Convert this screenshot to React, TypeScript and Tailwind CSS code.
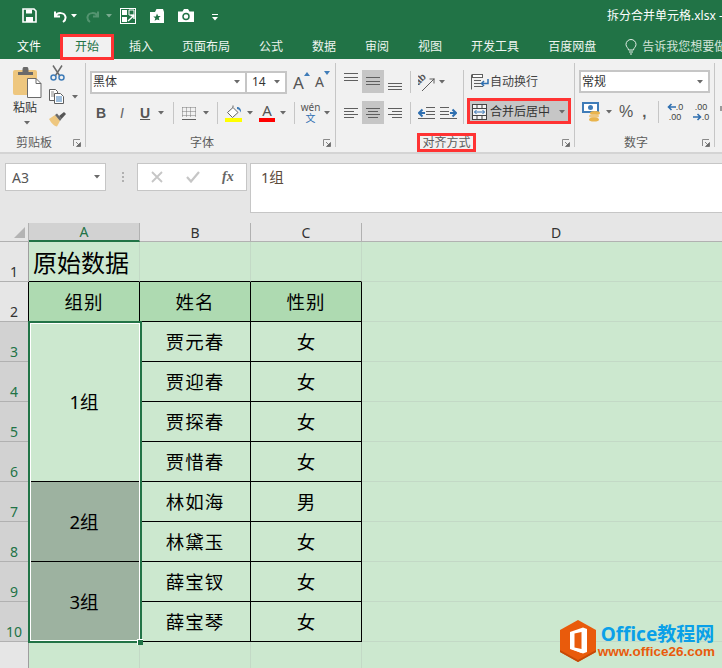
import React from "react";

const rows = [
  { n: 1, sel: false },
  { n: 2, sel: false },
  { n: 3, sel: true },
  { n: 4, sel: true },
  { n: 5, sel: true },
  { n: 6, sel: true },
  { n: 7, sel: true },
  { n: 8, sel: true },
  { n: 9, sel: true },
  { n: 10, sel: true },
  { n: 11, sel: false },
];

const people = [
  ["贾元春", "女"],
  ["贾迎春", "女"],
  ["贾探春", "女"],
  ["贾惜春", "女"],
  ["林如海", "男"],
  ["林黛玉", "女"],
  ["薛宝钗", "女"],
  ["薛宝琴", "女"],
];

const tabs = ["插入", "页面布局", "公式", "数据", "审阅", "视图", "开发工具", "百度网盘"];

const Caret = ({ className = "" }: { className?: string }) => (
  <svg width="6" height="4" viewBox="0 0 6 4" className={className}>
    <path d="M0 0h6L3 3.500z" fill="#6a6a6a" />
  </svg>
);

const Launcher = () => (
  <svg width="8" height="8" viewBox="0 0 8 8" className="ml-[5px] mr-[4px] shrink-0">
    <path d="M0.500 7V0.500H7" fill="none" stroke="#8a8a8a" />
    <path d="M3 3l3 3M7.500 3.500v4h-4z" fill="#6a6a6a" stroke="#6a6a6a" strokeWidth="0.800" />
  </svg>
);

const Sep = ({ className = "" }: { className?: string }) => (
  <div className={`w-px bg-[#c6c6c6] shrink-0 ${className}`} />
);

const GroupSep = () => <div className="w-px h-[84px] mt-[4px] bg-[#c6c6c6] shrink-0" />;

const Lines = ({ lines, className = "" }: { lines: number[][]; className?: string }) => (
  <svg width="15" height="23" viewBox="0 0 15 23" className={className}>
    {lines.map((l, i) => (
      <rect key={i} x={l[0]} y={l[2]} width={l[1] - l[0]} height="1" fill="#5f5f5f" />
    ))}
  </svg>
);

const GroupLabel = ({ children }: { children: React.ReactNode }) => (
  <div className="mt-auto flex h-[19px] items-center">
    <div className="flex-1 text-center text-[12px] leading-[19px] text-[#5c5c5c]">{children}</div>
    <Launcher />
  </div>
);

const Combo = ({ text, className = "" }: { text: string; className?: string }) => (
  <div className={`flex h-[23px] items-center justify-between border-2 border-[#c6c6c6] bg-white pl-[1px] pr-[5px] text-[12px] text-[#333] ${className}`}>
    <span>{text}</span>
    <Caret />
  </div>
);

const PasteIcon = () => (
  <svg width="29" height="31" viewBox="0 0 29 31">
    <rect x="0" y="3" width="24" height="25" rx="2" fill="#eec77f" />
    <path d="M5 8V5h4.500V2.500a3 3 0 0 1 6 0V5H20v3z" fill="#6a6a6a" />
    <path d="M14.500 11.500h8.500l5 5v14h-13.500z" fill="#fff" stroke="#6a6a6a" />
    <path d="M23 11.500v5h5" fill="none" stroke="#6a6a6a" />
  </svg>
);

const ScissorsIcon = () => (
  <svg width="15" height="16" viewBox="0 0 15 16">
    <path d="M3 0.500L9.500 10.500M12 0.500L5.500 10.500" stroke="#6a6a6a" strokeWidth="1.500" fill="none" />
    <circle cx="3.500" cy="12.500" r="2.500" fill="none" stroke="#3f7cb8" strokeWidth="1.500" />
    <circle cx="11.500" cy="12.500" r="2.500" fill="none" stroke="#3f7cb8" strokeWidth="1.500" />
  </svg>
);

const CopyIcon = () => (
  <svg width="16" height="15" viewBox="0 0 16 15">
    <path d="M0.500 0.500h6l2 2v9h-8z" fill="#fff" stroke="#5f5f5f" />
    <path d="M5.500 4.500h6l3 3v7h-9z" fill="#fff" stroke="#5f5f5f" />
    <path d="M7 8h6M7 10h6M7 12h6" stroke="#3f7cb8" />
    <path d="M2 3h3M2 5h3M2 7h3" stroke="#8a8a8a" />
  </svg>
);

const BrushIcon = () => (
  <svg width="17" height="15" viewBox="0 0 17 15">
    <path d="M0 7l6-4 5 6-3 5.500c-3 0-6-4-8-7.500z" fill="#eec77f" />
    <path d="M6 3l5 6 1.500-2L8 1.500z" fill="#6a6a6a" />
    <path d="M10 4l5-4 2 2-4.500 5z" fill="#555" />
  </svg>
);

const BucketIcon = () => (
  <svg width="17" height="13" viewBox="0 0 17 13">
    <path d="M8 0.500v2M8 2.500L13 7.500 7.500 12.500 2.500 7.500z" fill="#fff" stroke="#666" />
    <path d="M12 2c2.500 0 4.500 2 4 5.500-.8-1.500-1.500-3-4-3.500z" fill="#3f7cb8" />
  </svg>
);

const BordersIcon = () => (
  <svg width="14" height="13" viewBox="0 0 14 13">
    <path d="M0.500 0.500h13M0.500 4.500h13M0.500 8.500h13M0.500 0.500v10M4.500 0.500v10M8.500 0.500v10M13.500 0.500v10" stroke="#7a7a7a" strokeDasharray="1 1" fill="none" />
    <path d="M0 12.500h14" stroke="#5f5f5f" />
  </svg>
);

const OrientIcon = () => (
  <svg width="17" height="20" viewBox="0 0 17 20">
    <text x="0" y="13" transform="rotate(-45 1 13)" fontFamily="Liberation Sans" fontSize="10" fontWeight="700" fill="#555">ab</text>
    <path d="M4 19L16 7" stroke="#5f5f5f" />
    <path d="M16 6.500v5M16.500 7h-5" stroke="#5f5f5f" fill="none" />
  </svg>
);

const Indent = ({ flip = false }: { flip?: boolean }) => (
  <svg width="17" height="12" viewBox="0 0 17 12" className={flip ? "-scale-x-100" : ""}>
    <path d="M8 0.500h9M8 4.500h9M8 7.500h9M0 11.500h17" stroke="#5f5f5f" />
    <path d="M7 6H2M4.500 2.500L1 6l3.500 3.500" stroke="#2f6fb0" strokeWidth="2" fill="none" />
  </svg>
);

const WrapIcon = () => (
  <svg width="18" height="16" viewBox="0 0 18 16">
    <rect x="1.500" y="0.500" width="10" height="3" fill="#fff" stroke="#5f5f5f" />
    <path d="M0.500 0.500v15M3 6.500h7M3 9.500h7M3 12.500h9" stroke="#5f5f5f" />
    <path d="M17 5v4.500h-6M13 7l-2.500 2.500L13 12" stroke="#2f6fb0" strokeWidth="1.500" fill="none" />
  </svg>
);

const MergeIcon = () => (
  <svg width="15" height="16" viewBox="0 0 15 16">
    <rect x="0.500" y="0.500" width="14" height="15" fill="#f4f4f4" stroke="#444" />
    <path d="M0 4.500h15M0 11.500h15M5 0v4M10 0v4M5 12v4M10 12v4" stroke="#444" />
    <path d="M2.500 8h10M4.500 6l-2 2 2 2M10.500 6l2 2-2 2" stroke="#2f6fb0" fill="none" />
  </svg>
);

const CurrencyIcon = () => (
  <svg width="20" height="20" viewBox="0 0 20 20">
    <rect x="0" y="0" width="17" height="11" fill="#3f7cb8" />
    <rect x="2" y="2" width="13" height="7" fill="#fff" />
    <circle cx="8.500" cy="5.500" r="2.500" fill="#3f7cb8" />
    <ellipse cx="13" cy="11" rx="5" ry="2" fill="#e9b44c" />
    <ellipse cx="12" cy="14" rx="5" ry="2" fill="#eec77f" />
    <ellipse cx="12" cy="17.500" rx="5" ry="2" fill="#e9b44c" />
  </svg>
);

const Arrow = ({ flip = false }: { flip?: boolean }) => (
  <svg width="9" height="8" viewBox="0 0 9 8" className={flip ? "-scale-x-100" : ""}>
    <path d="M9 4H1.500M4.500 1L1.500 4l3 3" stroke="#2f6fb0" strokeWidth="1.600" fill="none" />
  </svg>
);

const Bulb = () => (
  <svg width="12" height="16" viewBox="0 0 12 16">
    <path d="M3.500 11c0-2-2.500-3-2.500-5.500a5 5 0 0 1 10 0c0 2.500-2.500 3.500-2.500 5.500z" fill="none" stroke="#e4efe8" />
    <path d="M4 13h4M5 15h2" stroke="#e4efe8" />
  </svg>
);

const Logo = () => (
  <svg width="38" height="44" viewBox="0 0 38 44">
    <path d="M19 1l18 10v22L19 43 1 33V11z" fill="#e95b0c" />
    <path d="M1 33l18 10 18-10v-2L19 41 1 31z" fill="#c44a08" />
    <path d="M11 13l13-4.500 4 1.500v23l-4 1.500-13-4.500z" fill="#fff" />
    <path d="M15.500 14.500l7-1.500v17l-7-1.500z" fill="#e95b0c" />
    <path d="M22.500 13v21l-11.500-4.500 11.500 1.500z" fill="#fff" />
  </svg>
);

function Arrowhead({ className = "" }: { className?: string }) {
  return (
    <svg width="6" height="4" viewBox="0 0 6 4" className={className}>
      <path d="M0 0h6L3 3.500z" fill="#fff" />
    </svg>
  );
}

function Ribbon() {
  return (
    <div className="flex h-[95px] border-b-2 border-[#d4d4d4] bg-[#f1f1f1]">
      {/* 剪贴板 */}
      <div className="flex w-[85px] shrink-0 flex-col">
        <div className="flex pl-[13px]">
          <div className="flex w-[36px] flex-col pt-[8px]">
            <PasteIcon />
            <div className="mt-[1px] w-[24px] text-[12px] leading-[17px] text-[#333]">粘贴</div>
            <Caret className="ml-[11px] mt-[5px]" />
          </div>
          <div className="flex flex-col pt-[6px]">
            <div className="ml-[1px]"><ScissorsIcon /></div>
            <div className="mt-[8px] flex items-center gap-[7px]">
              <CopyIcon />
              <Caret />
            </div>
            <div className="mt-[8px]"><BrushIcon /></div>
          </div>
        </div>
        <GroupLabel>剪贴板</GroupLabel>
      </div>
      <GroupSep />

      {/* 字体 */}
      <div className="flex w-[249px] shrink-0 flex-col">
        <div className="flex items-center pl-[4px] pt-[11px]">
          <Combo text="黑体" className="w-[157px]" />
          <Combo text="14" className="w-[40px] border-l-0 pl-[5px]" />
          <div className="ml-[6px] flex items-start">
            <span className="text-[17px] leading-[23px] text-[#555]">A</span>
            <svg width="6" height="4" viewBox="0 0 6 4" className="mt-[1px]"><path d="M0 4h6L3 0z" fill="#3f7cb8" /></svg>
          </div>
          <div className="ml-[5px] flex items-start">
            <span className="text-[14px] leading-[24px] text-[#555]">A</span>
            <svg width="6" height="4" viewBox="0 0 6 4" className="mt-[1px]"><path d="M0 0h6L3 4z" fill="#3f7cb8" /></svg>
          </div>
        </div>
        <div className="mt-[8px] flex h-[22px] items-center pl-[10px]">
          <span className="w-[24px] font-['Liberation_Sans'] text-[14px] font-bold text-[#555]">B</span>
          <span className="w-[20px] font-['Liberation_Sans'] text-[14px] italic text-[#666]">I</span>
          <span className="w-[17px] font-['Liberation_Sans'] text-[14px] font-bold text-[#555] underline">U</span>
          <Caret className="ml-[1px]" />
          <Sep className="ml-[9px] h-[22px]" />
          <div className="ml-[8px]"><BordersIcon /></div>
          <Caret className="ml-[7px]" />
          <Sep className="ml-[8px] h-[22px]" />
          <div className="ml-[7px] flex w-[17px] flex-col">
            <BucketIcon />
            <div className="h-[4px] bg-[#ffff00]" />
          </div>
          <Caret className="ml-[5px]" />
          <div className="ml-[6px] flex w-[16px] flex-col items-center">
            <span className="text-[15px] leading-[13px] text-[#555]">A</span>
            <div className="mt-[1px] h-[4px] w-full bg-[#ff0000]" />
          </div>
          <Caret className="ml-[5px]" />
          <Sep className="ml-[8px] h-[22px]" />
          <div className="ml-[7px] flex w-[17px] flex-col items-center text-[10px] leading-[11px]">
            <span className="text-[#555]">wén</span>
            <span className="text-[#2f6fb0]">文</span>
          </div>
          <Caret className="ml-[5px]" />
        </div>
        <GroupLabel>字体</GroupLabel>
      </div>
      <GroupSep />

      {/* 对齐方式 */}
      <div className="flex w-[238px] shrink-0 flex-col">
        <div className="flex pl-[8px] pt-[11px]">
          <div className="flex w-[66px] flex-col gap-[8px]">
            <div className="flex h-[23px] items-center">
              <Lines lines={[[0, 14, 3], [0, 14, 7], [0, 14, 10]]} />
              <div className="ml-[3px] flex h-[23px] w-[22px] items-center justify-center bg-[#c6c6c6]">
                <Lines lines={[[0, 14, 7], [0, 14, 11], [0, 14, 14]]} />
              </div>
              <Lines className="ml-[4px]" lines={[[0, 14, 13], [0, 14, 16], [0, 14, 19]]} />
            </div>
            <div className="flex h-[23px] items-center">
              <Lines lines={[[0, 14, 7], [0, 10, 10], [0, 14, 13], [0, 10, 16]]} />
              <div className="ml-[3px] flex h-[23px] w-[22px] items-center justify-center bg-[#c6c6c6]">
                <Lines lines={[[0, 14, 7], [2, 12, 10], [0, 14, 13], [2, 12, 16]]} />
              </div>
              <Lines className="ml-[4px]" lines={[[0, 14, 7], [4, 14, 10], [0, 14, 13], [4, 14, 16]]} />
            </div>
          </div>
          <div className="flex w-[53px] shrink-0 flex-col gap-[8px]">
            <div className="flex h-[23px] items-center">
              <Sep className="h-[22px]" />
              <div className="ml-[7px]"><OrientIcon /></div>
              <Caret className="ml-[4px]" />
            </div>
            <div className="flex h-[23px] items-center">
              <Sep className="h-[22px]" />
              <div className="ml-[7px] flex gap-[5px]">
                <Indent />
                <Indent flip />
              </div>
            </div>
          </div>
          <Sep className="h-[54px]" />
          <div className="flex flex-col">
            <div className="ml-[7px] flex h-[23px] items-center gap-[1px] text-[12px] text-[#444]">
              <WrapIcon />
              <span>自动换行</span>
            </div>
            <div className="ml-[3px] mt-[5px] flex h-[26px] w-[104px] items-center border-[3px] border-[#ff3333] bg-[#c6c6c6] pl-[2px] pt-[1px] text-[12px] text-[#333]">
              <MergeIcon />
              <span className="ml-[3px] whitespace-nowrap">合并后居中</span>
              <Caret className="ml-[9px]" />
            </div>
          </div>
        </div>
        <div className="mt-auto flex h-[19px] items-center">
          <div className="flex flex-1 justify-center">
            <span className="h-[19px] border-[3px] border-[#ff3333] px-[2px] text-[12px] leading-[13px] text-[#5c5c5c]">对齐方式</span>
          </div>
          <Launcher />
        </div>
      </div>
      <GroupSep />

      {/* 数字 */}
      <div className="flex w-[139px] shrink-0 flex-col">
        <div className="pl-[4px] pr-[4px] pt-[11px]">
          <Combo text="常规" />
        </div>
        <div className="mt-[8px] flex h-[22px] items-center pl-[7px]">
          <CurrencyIcon />
          <Caret className="ml-[4px]" />
          <span className="ml-[7px] font-['Liberation_Sans'] text-[16px] text-[#555]">%</span>
          <span className="ml-[9px] font-['Liberation_Sans'] text-[15px] font-bold leading-[12px] text-[#555]">,</span>
          <Sep className="ml-[12px] h-[22px]" />
          <div className="ml-[5px] flex w-[21px] flex-col items-center font-['Liberation_Sans'] text-[9px] leading-[10px] text-[#444]">
            <div className="flex items-center"><Arrow />.0</div>
            <div>.00</div>
          </div>
          <div className="ml-[5px] flex w-[21px] flex-col items-center font-['Liberation_Sans'] text-[9px] leading-[10px] text-[#444]">
            <div>.00</div>
            <div className="flex items-center"><Arrow flip />.0</div>
          </div>
        </div>
        <GroupLabel>数字</GroupLabel>
      </div>
      <GroupSep />
      <div className="ml-[5px] mt-[47px] h-[5px] w-[2px] bg-[#9a9a9a]" />
    </div>
  );
}

function Sheet() {
  const head = "flex items-center justify-center border-r border-b border-[#b1b1b1] text-[14px]";
  const rowHead = "flex items-end justify-center border-b border-r pb-[1px] text-[14px] leading-[17px]";
  const grid = "border-r border-b border-[#c3d9c6] bg-[#cce8cf]";
  const cell = "flex items-center justify-center border-r border-b border-black text-[18.5px] text-black";
  const headCell = "flex items-center justify-center border-r border-b border-black bg-[#aedab1] text-[18.5px] tracking-[1px] text-black";

  return (
    <div className="grid grid-cols-[29px_111px_111px_111px_389px] grid-rows-[19px_repeat(11,40px)] bg-[#cce8cf]">
      <div className="flex items-end justify-end border-r border-b border-[#b1b1b1] bg-[#e6e6e6] pb-[3px] pr-[3px]">
        <svg width="11" height="11" viewBox="0 0 11 11"><path d="M11 0v11H0z" fill="#b4b4b4" /></svg>
      </div>
      <div className="flex items-center justify-center border-b-2 border-r border-b-[#217346] border-r-[#b1b1b1] bg-[#d2d2d2] text-[14px] text-[#217346]">A</div>
      <div className={`${head} bg-[#e6e6e6] text-[#333]`}>B</div>
      <div className={`${head} bg-[#e6e6e6] text-[#333]`}>C</div>
      <div className={`${head} bg-[#e6e6e6] text-[#333]`}>D</div>

      {rows.map((r) => (
        <div
          key={r.n}
          style={{ gridColumnStart: 1, gridRowStart: r.n + 1 }}
          className={`${rowHead} ${r.n === 2 ? "border-r-black" : "border-r-[#9e9e9e]"} border-b-[#b1b1b1] ${
            r.sel ? "bg-[#d2d2d2] text-[#217346]" : "bg-[#e6e6e6] text-[#333]"
          }`}
        >
          {r.n === 11 ? "" : r.n}
        </div>
      ))}

      {/* row 1 */}
      <div className="col-start-2 row-start-2 flex items-end border-r border-b border-b-black border-r-[#c3d9c6] bg-[#cce8cf] pb-[1px] pl-[4px] text-[24px] leading-[34px] text-black">原始数据</div>
      <div className="col-start-3 row-start-2 border-r border-b border-b-black border-r-[#c3d9c6]" />
      <div className="col-start-4 row-start-2 border-r border-b border-b-black border-r-[#c3d9c6]" />

      {/* row 2 */}
      <div className={`${headCell} col-start-2 row-start-3`}>组别</div>
      <div className={`${headCell} col-start-3 row-start-3`}>姓名</div>
      <div className={`${headCell} col-start-4 row-start-3`}>性别</div>

      {/* merged groups */}
      <div className={`${cell} col-start-2 row-start-4 row-span-4 bg-[#cce8cf]`}>1组</div>
      <div className={`${cell} col-start-2 row-start-8 row-span-2 bg-[#9db2a0]`}>2组</div>
      <div className={`${cell} col-start-2 row-start-10 row-span-2 bg-[#9db2a0]`}>3组</div>

      {people.map((p, i) => (
        <React.Fragment key={p[0]}>
          <div style={{ gridColumnStart: 3, gridRowStart: i + 4 }} className={`${cell} bg-[#cce8cf] tracking-[1px]`}>{p[0]}</div>
          <div style={{ gridColumnStart: 4, gridRowStart: i + 4 }} className={`${cell} bg-[#cce8cf]`}>{p[1]}</div>
        </React.Fragment>
      ))}

      {/* column D and row 11 */}
      {rows.map((r) => (
        <div key={r.n} style={{ gridColumnStart: 5, gridRowStart: r.n + 1 }} className={grid} />
      ))}
      <div className={`${grid} col-start-2 row-start-12`} />
      <div className={`${grid} col-start-3 row-start-12`} />
      <div className={`${grid} col-start-4 row-start-12`} />

      {/* selection A3:A10 */}
      <div className="pointer-events-none relative col-start-2 row-start-4 row-span-8">
        <div className="absolute -left-[1px] -top-[1px] bottom-[-1px] right-[-2px] border-2 border-[#217346]">
          <div className="h-full w-full border border-white" />
        </div>
        <div className="absolute bottom-[-3px] right-[-3px] h-[6px] w-[6px] border-l border-t border-white bg-[#217346]" />
      </div>
    </div>
  );
}

export default function App() {
  return (
    <div className="relative h-[668px] w-[722px] overflow-hidden bg-[#e6e6e6] font-['Noto_Sans','Noto_Sans_CJK_SC',sans-serif]">
      {/* title bar */}
      <div className="flex h-[30px] items-center bg-[#217346] pl-[22px] pt-[1px]">
        <svg width="15" height="15" viewBox="0 0 15 15">
          <path d="M1 1h11l2 2v11H1z" fill="none" stroke="#fff" strokeWidth="1.600" />
          <path d="M4 1.500h6v4H4zM4 9h7v5H4z" fill="#fff" />
        </svg>
        <svg width="16" height="14" viewBox="0 0 16 14" className="ml-[14px]">
          <path d="M4 2.500v5h5M4.500 7c2-4 9-4 10 1 .3 2-1 4-2.500 5" fill="none" stroke="#fff" strokeWidth="2" />
        </svg>
        <Arrowhead className="ml-[4px]" />
        <svg width="16" height="14" viewBox="0 0 16 14" className="ml-[9px] -scale-x-100 opacity-40">
          <path d="M4 2.500v5h5M4.500 7c2-4 9-4 10 1 .3 2-1 4-2.500 5" fill="none" stroke="#9fc6af" strokeWidth="2" />
        </svg>
        <Arrowhead className="ml-[4px] opacity-40" />
        <svg width="16" height="16" viewBox="0 0 16 16" className="ml-[8px]">
          <rect x="0.500" y="0.500" width="15" height="15" fill="none" stroke="#fff" />
          <path d="M2 2h5v5H2zM2 9h5v5H2z" fill="#fff" />
          <path d="M9 2h5v5H9z" fill="none" stroke="#fff" />
          <path d="M8 13l5.500-5M10.500 7.500h3.500V11" fill="none" stroke="#fff" strokeWidth="1.400" />
        </svg>
        <svg width="16" height="15" viewBox="0 0 16 15" className="ml-[13px]">
          <path d="M1 4h5l1.500-3H14l1 3v11H1z" fill="#fff" />
          <path d="M8 5.500l1.100 2.400 2.600.2-2 1.700.7 2.500L8 11.400l-2.400 1.400.7-2.500-2-1.700 2.600-.2z" fill="#217346" />
        </svg>
        <svg width="16" height="13" viewBox="0 0 16 13" className="ml-[13px]">
          <path d="M0 2.500h4.500L6 0h4l1.500 2.500H16V13H0z" fill="#fff" />
          <circle cx="8" cy="7.500" r="3" fill="none" stroke="#217346" strokeWidth="1.500" />
        </svg>
        <svg width="6" height="7" viewBox="0 0 6 7" className="ml-[18px] mt-[3px]">
          <path d="M0 0.500h6" stroke="#fff" />
          <path d="M0 3h6L3 6.500z" fill="#fff" />
        </svg>
        <div className="ml-auto w-[115px] whitespace-nowrap text-[12px] text-white">拆分合并单元格.xlsx -</div>
      </div>

      {/* tabs */}
      <div className="relative z-10 flex h-[29px] items-center whitespace-nowrap bg-[#217346] pl-[17px] pt-[4px] text-[12px] leading-[18px] text-white">
        <span className="shrink-0">文件</span>
        <div className="-mb-[1px] ml-[19px] mr-[15px] flex h-[26px] w-[54px] shrink-0 items-center justify-center self-end border-[3px] border-[#ff3333] bg-[#f1f1f1] text-[#217346]">开始</div>
        <div className="flex shrink-0 gap-[29px] text-[#eef5f0]">
          {tabs.map((t) => (
            <span key={t} className="shrink-0">{t}</span>
          ))}
        </div>
        <div className="ml-[29px] shrink-0"><Bulb /></div>
        <span className="ml-[5px] shrink-0 text-[#d3e3da]">告诉我您想要做</span>
      </div>

      <Ribbon />

      {/* formula bar */}
      <div className="flex h-[69px] bg-[#e6e6e6] pl-[5px] pt-[9px]">
        <div className="flex h-[28px] w-[101px] items-center justify-between border border-[#c6c6c6] bg-white pl-[6px] pr-[5px] text-[14px] text-[#555]">
          <span>A3</span>
          <Caret />
        </div>
        <div className="ml-[16px] mt-[9px] flex h-[10px] flex-col gap-[2px]">
          <div className="h-[2px] w-[2px] bg-[#b0b0b0]" />
          <div className="h-[2px] w-[2px] bg-[#b0b0b0]" />
          <div className="h-[2px] w-[2px] bg-[#b0b0b0]" />
        </div>
        <div className="ml-[13px] flex h-[28px] w-[110px] items-center border border-[#c6c6c6] bg-white">
          <svg width="12" height="12" viewBox="0 0 12 12" className="ml-[13px]">
            <path d="M1 1l10 10M11 1L1 11" stroke="#c6c6c6" strokeWidth="1.800" />
          </svg>
          <svg width="14" height="12" viewBox="0 0 14 12" className="ml-[23px]">
            <path d="M1 6l4 4.500L13 1" fill="none" stroke="#c6c6c6" strokeWidth="2.200" />
          </svg>
          <span className="ml-[22px] font-['Liberation_Serif'] text-[14px] font-bold italic leading-[16px] text-[#666]">fx</span>
        </div>
        <div className="ml-[3px] flex h-[50px] flex-1 border border-r-0 border-[#c6c6c6] bg-white pl-[10px] pt-[3px] text-[14.500px] leading-[20px] text-[#5c4a3a]">1组</div>
      </div>

      <Sheet />

      {/* watermark */}
      <div className="absolute bottom-[5px] right-[7px] flex items-center">
        <Logo />
        <div className="ml-[1px] flex flex-col">
          <span className="pl-[3px] text-[19px] font-bold leading-[20px] text-[#0aa0e8]">Office教程网</span>
          <span className="font-['Liberation_Sans'] text-[13.500px] font-bold leading-[15px] text-[#e95b0c]">www.office26.com</span>
        </div>
      </div>
    </div>
  );
}
